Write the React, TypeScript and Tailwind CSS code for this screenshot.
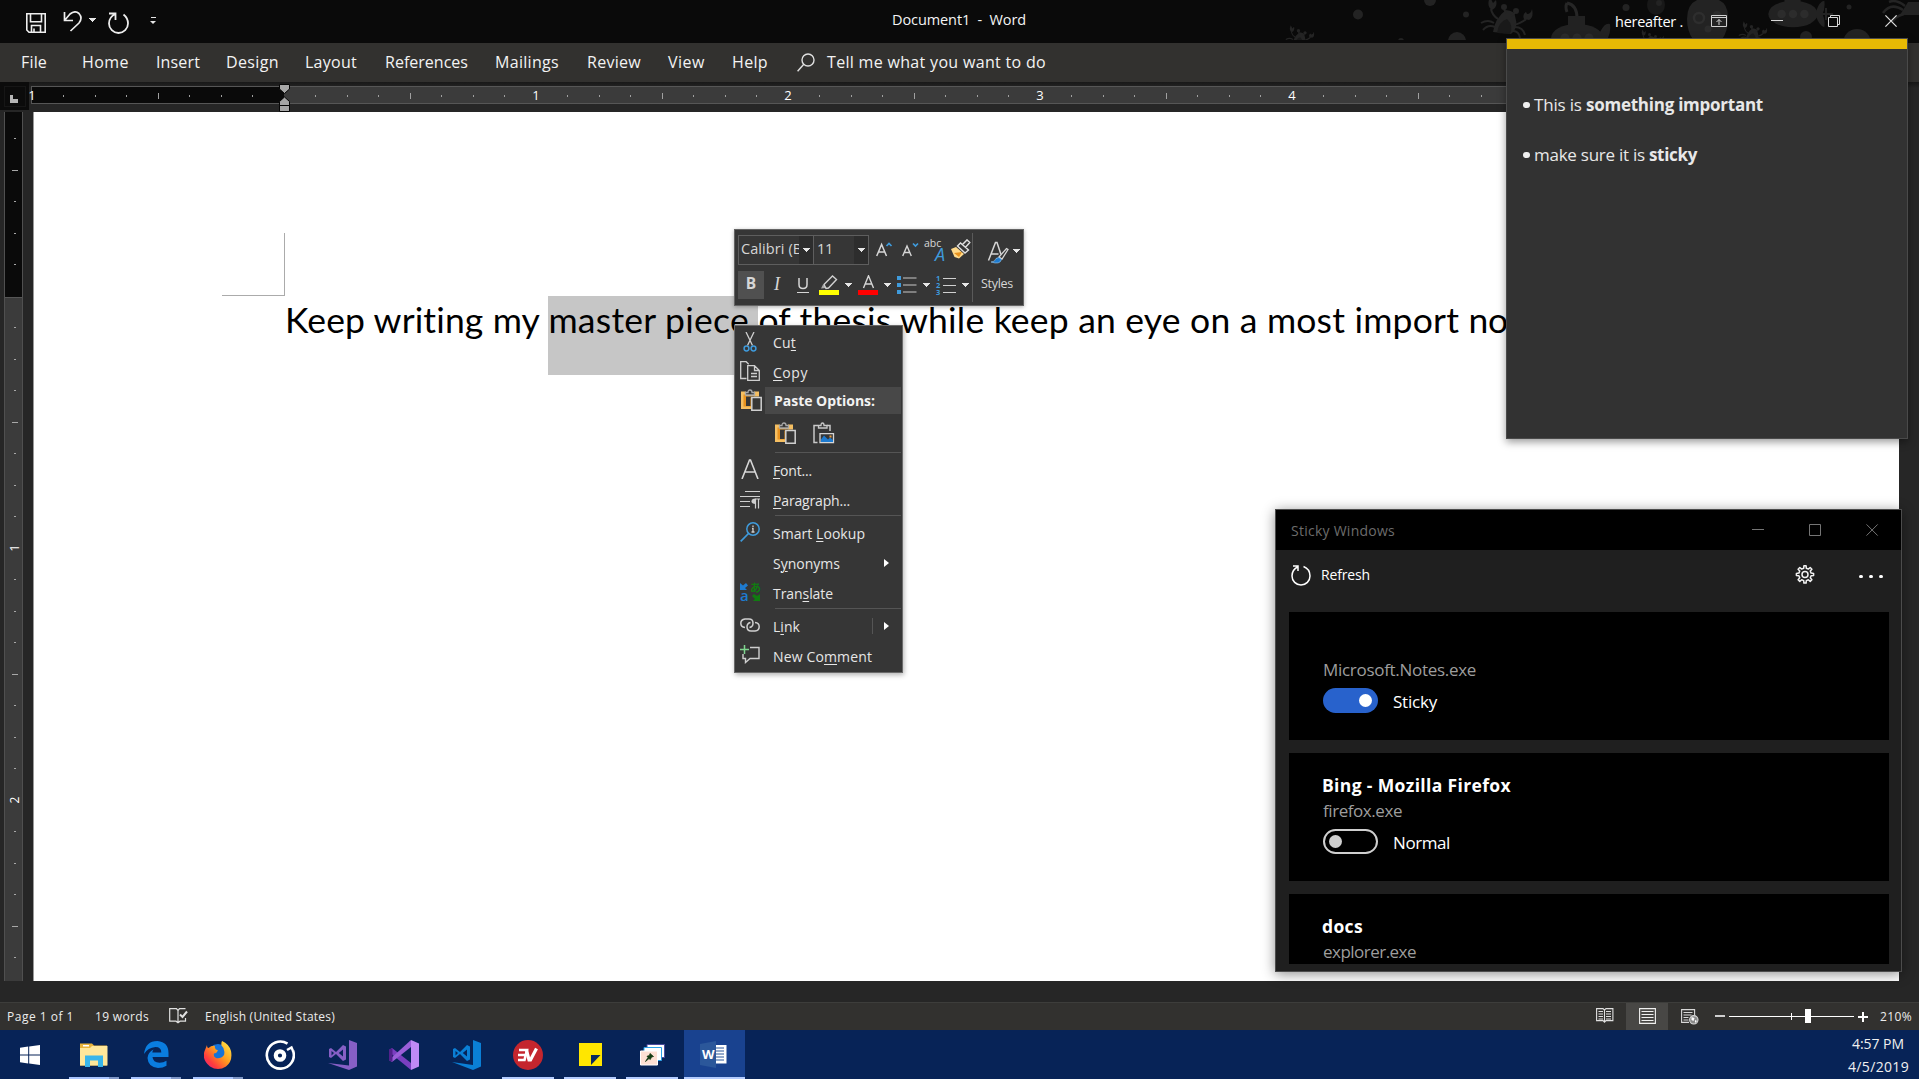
import { useLayoutEffect, useRef, useState, type ReactNode } from "react";

/* Text run tracked so that it fills exactly `w` pixels. */
function T({ w, className = "", children }: { w: number; className?: string; children: ReactNode }) {
  const ref = useRef<HTMLSpanElement>(null);
  const [spacing, setSpacing] = useState(0);
  useLayoutEffect(() => {
    const el = ref.current;
    if (!el) return;
    const n = el.textContent?.length ?? 1;
    setSpacing((w - el.getBoundingClientRect().width) / n);
  }, [w]);
  return (
    <span ref={ref} className={`inline-block shrink-0 whitespace-pre ${className}`} style={{ letterSpacing: spacing }}>
      {children}
    </span>
  );
}

function Caret({ className = "" }: { className?: string }) {
  return (
    <svg className={className} width="7" height="4" viewBox="0 0 7 4" shapeRendering="crispEdges">
      <path d="M0 0h7L3.500 4z" fill="#e6e6e6" />
    </svg>
  );
}

/* ---------- Title bar ---------- */

function Crab({ t }: { t: string }) {
  return (
    <g transform={t}>
      <path d="M-12 8Q-10-6 1-14Q10-13 10-8Q14 4 6 10Q-4 9-12 8z" fill="#242424" />
      <path d="M-8 9Q-6-3 2-5Q9 2 5 10z" fill="#191919" />
      <circle cx="-1" cy="-17" r="3" fill="#242424" />
      <circle cx="11" cy="-13" r="3" fill="#242424" />
      <path d="M-1-15l2 4M10-11l-4 3M-7-5q-6-4-7-10M9 1q8-2 12-6" stroke="#242424" strokeWidth="2" fill="none" />
      <path d="M-13-14q-6-4-2-13l3 6 3-3q2 7-4 10zM19-5q-2-5 2-7l1 2q4 0 5-5q2 9-3 11z" fill="#242424" />
      <path d="M-11-1q-6-4-13 0M-10 3q-7-3-12 3M10 3q8 0 10 8M8 7q6 0 7 7" stroke="#242424" strokeWidth="2" fill="none" />
    </g>
  );
}

function Submarine({ t }: { t: string }) {
  return (
    <g transform={t}>
      <ellipse cx="0" cy="0" rx="26" ry="14" fill="#222" />
      <path d="M-9-22h17v10h-17zM24-2q4-12 9-12q1 8-2 14q3 6 2 14q-6-2-9-13z" fill="#222" />
      <circle cx="-12" cy="0" r="4.5" fill="#2c2c2c" />
      <circle cx="0" cy="0" r="4.5" fill="#2c2c2c" />
      <circle cx="12" cy="0" r="4.5" fill="#2c2c2c" />
    </g>
  );
}

function SeaPattern() {
  return (
    <svg className="absolute left-[1270px] top-0" width="649" height="40" viewBox="1270 0 649 40">
      <g fill="#232323">
        <circle cx="1358" cy="14.500" r="5" />
        <circle cx="1430" cy="0" r="6" />
        <circle cx="1466" cy="14.500" r="3" />
        <circle cx="1457" cy="41" r="9" />
        <circle cx="1401" cy="41" r="3" />
        <circle cx="1626" cy="7.500" r="3.500" />
        <ellipse cx="1656" cy="5" rx="9" ry="10" fill="#181818" />
        <circle cx="1659" cy="3" r="3" />
        <path d="M1687 19q0-21 21-21t20 21q0 13-7 22h-27q-7-9-7-22z" />
        <circle cx="1806" cy="37" r="6" />
        <circle cx="1849" cy="7" r="2.500" />
        <circle cx="1857" cy="43" r="14" />
        <path d="M1590 26q9 4 10 6q5-10 10-8l-8 16h-12zM1900 15l8-13h11v13h-18z" />
        <path d="M1903 10q-12-8-20 3M1905 6q-9-7-16-4M1904 14q-8 2-12 8" fill="none" stroke="#242424" strokeWidth="2.500" />
        <path d="M1567 3q10 2 10 15M1567 3q-2 4 0 9" fill="none" stroke="#262626" strokeWidth="3" />
        <path d="M1820 14h13M1826 8v12" fill="none" stroke="#242424" strokeWidth="2" />
      </g>
      <circle cx="1699" cy="18" r="5" fill="none" stroke="#2e2e2e" strokeWidth="2.500" />
      <circle cx="1717" cy="15" r="4" fill="#2c2c2c" />
      <circle cx="1708" cy="29" r="3.500" fill="#2c2c2c" />
      <Crab t="translate(1505 24)" />
      <Crab t="translate(1299 40) scale(.55)" />
      <Crab t="translate(1752 36) scale(.55)" />
      <Crab t="translate(1650 43) scale(.5)" />
      <Submarine t="translate(1577 38)" />
      <Submarine t="translate(1793 14) scale(.95)" />
    </svg>
  );
}

function TitleBar() {
  return (
    <header className="relative flex h-[43px] shrink-0 items-center bg-[#0a0a0a]">
      <SeaPattern />
      <div className="relative flex w-[892px] items-center pl-[26px]">
        <svg width="20" height="20" viewBox="0 0 20 20" fill="none" stroke="#eee" strokeWidth="1.600" className="mt-[3px]">
          <path d="M.8.8h18.400v18.400H3L.8 17zM4.500.8v8h11v-8M5.500 19v-6.500h9V19M8 19v-3.500" />
        </svg>
        <svg width="20" height="21" viewBox="0 0 20 21" fill="none" stroke="#eee" strokeWidth="1.700" className="ml-[17px]">
          <path d="M1.500 1v8.500H10M1.500 9.500L7 3Q12-1 16 2.500Q20 7 16 12L7.500 20" />
        </svg>
        <Caret className="ml-[6px] mt-[-4px]" />
        <svg width="21" height="22" viewBox="0 0 21 22" fill="none" stroke="#eee" strokeWidth="1.800" className="ml-[12px] mt-[2px]">
          <path d="M1 1.500h6.500V8M7.500 2Q1 5 1 11.500a9.500 9.500 0 0 0 19 0Q20 6 15.500 2.500" />
        </svg>
        <div className="ml-[21px] mt-[-2px] flex flex-col items-center gap-[3px]">
          <div className="h-px w-[5px] bg-[#e6e6e6]" />
          <svg width="6" height="3" viewBox="0 0 6 3">
            <path d="M0 0h6L3 3z" fill="#e6e6e6" />
          </svg>
        </div>
      </div>
      <T w={134} className="relative -top-[2px] text-[14.500px] text-[#f4f4f4]">
        {"Document1  -  Word"}
      </T>
      <div className="relative ml-auto flex items-center pr-[21px]">
        <T w={68} className="text-[14.500px] text-white">hereafter .</T>
        <svg width="16" height="12" viewBox="0 0 16 12" fill="none" stroke="#d0d0d0" className="ml-[28px] -mt-px">
          <path d="M.5.500h15v11H.5zM.5 2.500h15M8 10V4.500M5.500 7L8 4.500 10.500 7" />
        </svg>
        <div className="ml-[44px] mt-[-2px] h-px w-[12px] bg-[#d8d8d8]" />
        <svg width="12" height="12" viewBox="0 0 12 12" fill="none" stroke="#d8d8d8" className="ml-[45px] -mt-px">
          <path d="M.5 2.500h9v9h-9zM2.500 2V.5h9v9H10" />
        </svg>
        <svg width="12" height="12" viewBox="0 0 12 12" fill="none" stroke="#e0e0e0" strokeWidth="1.200" className="ml-[45px] mr-px -mt-px">
          <path d="M.4.400l11.200 11.200M11.600.400L.4 11.600" />
        </svg>
      </div>
    </header>
  );
}

/* ---------- Ribbon ---------- */

const TABS: [string, number, string][] = [
  ["File", 26, "ml-[21px]"],
  ["Home", 47, "ml-[35px]"],
  ["Insert", 44, "ml-[27px]"],
  ["Design", 53, "ml-[26px]"],
  ["Layout", 52, "ml-[26px]"],
  ["References", 83, "ml-[28px]"],
  ["Mailings", 64, "ml-[27px]"],
  ["Review", 54, "ml-[28px]"],
  ["View", 37, "ml-[27px]"],
  ["Help", 36, "ml-[27px]"],
];

function Ribbon() {
  return (
    <nav className="flex h-[39px] shrink-0 items-center bg-[#32312f] pb-[2px] text-[16px] text-[#f3f3f3]">
      {TABS.map(([label, w, gap]) => (
        <T key={label} w={w} className={gap}>{label}</T>
      ))}
      <svg width="18" height="19" viewBox="0 0 18 19" fill="none" stroke="#e0e0e0" strokeWidth="1.400" className="ml-[29px] mt-px">
        <circle cx="11" cy="7" r="6" />
        <path d="M6.800 11.300L.6 18.200" />
      </svg>
      <T w={219} className="ml-[12px]">Tell me what you want to do</T>
    </nav>
  );
}

/* ---------- Rulers ---------- */

function HRuler() {
  const cells = Array.from({ length: 58 }, (_, k) => k - 8);
  return (
    <div className="flex h-[30px] shrink-0 bg-[#262626] bg-linear-to-b from-[#181818] from-0% to-[#262626] to-20%">
      <div className="flex h-[28px] w-[29px] items-center justify-center bg-[#0b0b0b]">
        <div className="flex h-[21px] w-[22px] items-end justify-center border border-[#161616] pb-[3px] pr-[2px]">
          <div className="h-[8px] w-[8px] border-b-[4px] border-l-[3px] border-[#b5b5b5]" />
        </div>
      </div>
      <div className="relative ml-[2px] mt-[4px] flex h-[18px] w-[1868px]">
        <div className="w-[253px] border-y border-l border-[#565656] bg-[#0a0a0a]" />
        <div className="flex-1 border-y border-[#565656] bg-[#3b3b3b]" />
        <div className="absolute left-[-14.750px] top-0 flex h-[18px] items-center">
          {cells.map((i) => (
            <div key={i} className="flex w-[31.500px] shrink-0 justify-center text-[13px] leading-none text-white">
              {i === 0 ? null : i % 8 === 0 ? (
                <span className="mt-px">{Math.abs(i / 8)}</span>
              ) : i % 4 === 0 ? (
                <div className="mt-[2px] h-[6px] w-px bg-[#a0a0a0]" />
              ) : (
                <div className="mt-[2px] h-[2px] w-px bg-[#a0a0a0]" />
              )}
            </div>
          ))}
        </div>
        <svg className="absolute left-[248px] top-[-2px]" width="11" height="28" viewBox="0 0 11 28" fill="#a6a6a6" stroke="#050505">
          <path d="M.5.500h10v4.500l-5 4.500-5-4.500zM.5 27.500v-6h10v6zM.5 21.500v-4l5-4.500 5 4.500v4z" />
        </svg>
      </div>
    </div>
  );
}

function VRuler() {
  const cells = Array.from({ length: 27 }, (_, k) => k - 5);
  return (
    <div className="relative ml-[4px] flex h-[869px] w-[19px] shrink-0 flex-col overflow-hidden border-x border-[#505050]">
      <div className="h-[185px] bg-[#0a0a0a]" />
      <div className="flex-1 border-t border-[#565656] bg-[#3b3b3b]" />
      <div className="absolute inset-x-0 top-[11px] flex flex-col">
        {cells.map((i) => (
          <div key={i} className="flex h-[31.500px] items-center justify-center pl-[3px] text-[12px] leading-none text-white">
            {i === 0 ? null : i % 8 === 0 ? (
              <span className="-rotate-90">{i / 8}</span>
            ) : i % 4 === 0 ? (
              <div className="h-px w-[6px] bg-[#a8a8a8]" />
            ) : (
              <div className="h-px w-[2px] bg-[#a8a8a8]" />
            )}
          </div>
        ))}
      </div>
    </div>
  );
}

/* ---------- Document ---------- */

function Page() {
  return (
    <main className="ml-[10px] h-[869px] w-[1866px] overflow-hidden border-l border-[#999] bg-white">
      <div className="ml-[188px] mt-[121px] h-[63px] w-[63px] border-b border-r border-[#ababab]" />
      <div className="ml-[251px] flex h-[79px] items-start whitespace-pre font-[Lato,sans-serif] text-[35.500px] leading-[48px] text-black">
        <T w={264}>{"Keep writing my "}</T>
        <div className="h-[79px] w-[210px] bg-[#c6c6c6]">
          <T w={210}>{"master piece "}</T>
        </div>
        <T w={710}>{"of thesis while keep an eye on a most import "}</T>
        <span className="tracking-[-0.3px]">no</span>
      </div>
    </main>
  );
}

/* ---------- Mini toolbar ---------- */

function MiniToolbar() {
  return (
    <div className="absolute left-[734px] top-[229px] flex h-[77px] w-[290px] border border-[#646464] bg-[#363636] pl-[3px] text-[#d6d6d6] shadow-[0_1px_4px_rgba(0,0,0,0.3)]">
      <div className="flex w-[234px] flex-col pt-[5px]">
        <div className="flex h-[30px] items-center">
          <div className="flex h-[30px] w-[76px] border border-[#5e5e5e]">
            <div className="flex w-[60px] items-center overflow-hidden pb-[3px] pl-[2px] text-[14.500px]">
              <T w={70}>Calibri (Bo</T>
            </div>
            <div className="flex flex-1 items-center justify-center bg-[#2d2d2d]"><Caret /></div>
          </div>
          <div className="flex h-[30px] w-[55px] border border-l-0 border-[#5e5e5e]">
            <div className="flex w-[40px] items-center pb-[3px] pl-[3px] text-[14.500px]"><T w={16}>11</T></div>
            <div className="flex flex-1 items-center justify-center bg-[#2d2d2d]"><Caret /></div>
          </div>
          <svg className="mb-[2px] ml-[7px]" width="17" height="15" viewBox="0 0 17 15" fill="none">
            <path d="M.7 14L5.600 2.500 10.500 14M2.500 10h6.200" stroke="#d6d6d6" strokeWidth="1.500" />
            <path d="M10.500 4L13 1.500 15.500 4" stroke="#3f9bdc" strokeWidth="1.700" />
          </svg>
          <svg className="mb-[2px] ml-[9px]" width="17" height="15" viewBox="0 0 17 15" fill="none">
            <path d="M.7 14L5 4 9.300 14M2.200 10.500h5.500" stroke="#d6d6d6" strokeWidth="1.400" />
            <path d="M11 1.500L13.500 4 16 1.500" stroke="#3f9bdc" strokeWidth="1.700" />
          </svg>
          <div className="relative ml-[5px] h-[24px] w-[24px]">
            <span className="absolute left-0 top-0 text-[10.500px] leading-none">abc</span>
            <span className="absolute left-[11px] top-[7px] text-[18px] italic leading-none text-[#3f9bdc]">A</span>
          </div>
          <svg className="mb-[2px] ml-[2px]" width="21" height="21" viewBox="0 0 21 21">
            <path d="M1 10l5-2 8 7-5 4.500L4.500 18z" fill="#ffd98a" />
            <path d="M4 14l8-1-3 5z" fill="#e8921e" />
            <path d="M7.500 7l3-3 8 7-3.500 3zM12.500 5.500L17 .9l2.800 2.700-4.300 4.600" fill="#363636" stroke="#e0e0e0" strokeWidth="1.400" />
          </svg>
        </div>
        <div className="mt-[6px] flex h-[28px] items-center">
          <div className="flex h-[28px] w-[26px] items-center justify-center bg-[#505050] pb-[2px] text-[15.500px] font-bold">B</div>
          <div className="flex w-[26px] justify-center pb-[2px] font-['Liberation_Serif',serif] text-[18px] italic">I</div>
          <div className="flex w-[25px] flex-col items-center">
            <svg width="12" height="17" viewBox="0 0 12 17" fill="none" stroke="#d6d6d6">
              <path d="M2 1v6.500q0 4 4 4t4-4V1" strokeWidth="1.500" />
              <path d="M0 15.500h12" />
            </svg>
          </div>
          <svg className="ml-[4px]" width="21" height="20" viewBox="0 0 21 20">
            <path d="M2 13.500l2-4 3.500 3.500z" fill="#aaa" />
            <path d="M5 9.500L13.500 1l4 3.500-8 8.500-2.500.5z" fill="none" stroke="#d0d0d0" strokeWidth="1.400" />
            <path d="M0 15h20v5H0z" fill="#ff0" />
          </svg>
          <Caret className="ml-[5px]" />
          <svg className="ml-[6px]" width="21" height="20" viewBox="0 0 21 20">
            <path d="M5.500 13L10.500.8 15.500 13M7.200 9h6.600" fill="none" stroke="#d6d6d6" strokeWidth="1.400" />
            <path d="M0 15h20v5H0z" fill="#f00" />
          </svg>
          <Caret className="ml-[5px]" />
          <svg className="ml-[6px]" width="20" height="20" viewBox="0 0 20 20">
            <path d="M0 1h4v4H0zM0 8h4v4H0zM0 15h4v4H0z" fill="#3f9bdc" />
            <path d="M6 3h13.500M6 10h13.500M6 17h13.500" stroke="#c8c8c8" strokeWidth="1.200" />
          </svg>
          <Caret className="ml-[6px]" />
          <div className="ml-[6px] flex items-center gap-[3px]">
            <div className="flex w-[4px] flex-col text-[7.500px] font-bold leading-[7px] text-[#3f9bdc]">
              <span>1</span><span>2</span><span>3</span>
            </div>
            <div className="flex w-[13px] flex-col gap-[6px]">
              <div className="h-px bg-[#d0d0d0]" /><div className="h-px bg-[#d0d0d0]" /><div className="h-px bg-[#d0d0d0]" />
            </div>
          </div>
          <Caret className="ml-[6px]" />
        </div>
      </div>
      <div className="mt-[3px] h-[69px] w-px bg-[#5a5a5a]" />
      <div className="flex w-[49px] flex-col items-center pt-[11px]">
        <div className="flex items-center gap-[4px] pl-[11px]">
          <svg width="22" height="24" viewBox="0 0 22 24" fill="none">
            <path d="M1.500 19.500L8.500 1.500h1.500l4 12M4 13h7.500" stroke="#d6d6d6" strokeWidth="1.500" />
            <path d="M12 16l7.500-8.500 1.500 1L15 18z" stroke="#d6d6d6" strokeWidth="1.300" fill="#363636" />
            <path d="M4 21q4 0 5-3.500 3-2.500 5.500 1Q13 24 4 21z" fill="#1e7bd0" stroke="#9ed0f5" strokeWidth=".6" />
          </svg>
          <Caret className="-mt-[4px]" />
        </div>
        <T w={33} className="mt-[10px] pr-px text-[12.500px] leading-[18px]">Styles</T>
      </div>
    </div>
  );
}

/* ---------- Context menu ---------- */

function PasteIcon() {
  return (
    <svg width="21" height="22" viewBox="0 0 21 22" fill="none">
      <path d="M0 2.500h5v3h8v-3h5v5h-7.500V20H0z" fill="#f5bf62" />
      <path d="M2.500 5.500h2.500v2h8v2h-2.500v8h-8z" fill="#e8921e" />
      <path d="M5 7.500h8v1H9.500V17H5z" fill="#363636" />
      <path d="M4.500 6V3.500H7Q7 1 9 1t2 2.500h2.500V6z" stroke="#a8a8a8" strokeWidth="1.300" fill="#363636" />
      <path d="M10.800 8.500h9.400v12.700h-9.400z" stroke="#d0d0d0" strokeWidth="1.500" fill="#363636" />
    </svg>
  );
}

function PastePictureIcon() {
  return (
    <svg width="22" height="22" viewBox="0 0 22 22" fill="none">
      <path d="M4.500 20.500H1V3.500h4M14 3.500h3V9" stroke="#c8c8c8" strokeWidth="1.500" />
      <path d="M5.500 6V3.500H8Q8 1 9.500 1T11 3.500h3V6z" stroke="#c8c8c8" strokeWidth="1.300" />
      <path d="M7 11.700h13.500v9H7z" stroke="#d6d6d6" strokeWidth="1.300" fill="#363636" />
      <path d="M8 20v-2.500l3-4 4 4 2-2 3 2.500v2z" fill="#1e7bd0" />
      <path d="M16.500 13.500h2v2h-2z" fill="#f0a040" />
    </svg>
  );
}

const CutIcon = (
  <svg width="14" height="20" viewBox="0 0 14 20" fill="none" className="-mt-[3px]">
    <path d="M3 0l6.500 13.500M11 0L4.500 13.500" stroke="#cfcfcf" strokeWidth="1.300" />
    <circle cx="3.500" cy="16.500" r="2.400" stroke="#3f9bdc" strokeWidth="1.500" />
    <circle cx="10.500" cy="16.500" r="2.400" stroke="#3f9bdc" strokeWidth="1.500" />
  </svg>
);
const CopyIcon = (
  <svg width="20" height="20" viewBox="0 0 20 20" fill="none" stroke="#cfcfcf" strokeWidth="1.300" className="-mt-[5px]">
    <path d="M6.500 17.500H.7V.7h5.500l2.500 2.500" />
    <path d="M7.700 4.700h6.800l4.800 4.800v9.800H7.700zM14.500 5v4.500h4.500M11 12.500h6M11 15.500h6" />
  </svg>
);
const FontIcon = (
  <svg width="18" height="20" viewBox="0 0 18 20" fill="none" stroke="#d6d6d6" strokeWidth="1.600" className="-mt-[5px]">
    <path d="M1 20L8.500 1h1L17 20M4 13h10" />
  </svg>
);
const ParagraphIcon = (
  <svg width="20" height="19" viewBox="0 0 20 19" fill="none" stroke="#cfcfcf" strokeWidth="1.200" className="-mt-[3px]">
    <path d="M5 1.500h15M0 6.500h20M0 11.500h10M0 16.500h10" />
    <path d="M15.500 18.500V9M18.500 18.500V9M20 9h-5" />
    <path d="M15.500 8.500v5.500q-4 0-4-2.700t4-2.800z" fill="#cfcfcf" stroke="none" />
  </svg>
);
const LookupIcon = (
  <svg width="20" height="20" viewBox="0 0 20 20" fill="none" className="-mt-[5px]">
    <circle cx="13" cy="7" r="6.200" stroke="#3f9bdc" strokeWidth="1.500" />
    <path d="M8.500 11.500L.7 19.300" stroke="#3f9bdc" strokeWidth="1.700" />
    <path d="M13 3.500v1.500M12 6.500h1v3.500M11.500 10h3" stroke="#d0d0d0" strokeWidth="1.300" />
  </svg>
);
const TranslateIcon = (
  <div className="relative -mt-[4px] h-[20px] w-[20px] leading-none">
    <svg width="20" height="20" viewBox="0 0 20 20">
      <path d="M0 1v7h7L5 6l3-2.500L6 1 3 3.500z" fill="#1e7bd0" />
      <path d="M20 12v7h-7l2-2-3-3 2-2 3 2z" fill="#107c10" />
    </svg>
    <span className="absolute left-0 top-[6px] text-[15px] font-semibold leading-[15px] text-[#1e7bd0]">a</span>
    <span className="absolute left-[10px] top-0 font-['Noto_Sans_CJK_JP',sans-serif] text-[11px] font-bold leading-[11px] text-[#107c10]">あ</span>
  </div>
);
const LinkIcon = (
  <svg width="20" height="14" viewBox="0 0 20 14" fill="none" stroke="#cfcfcf" strokeWidth="1.500" className="-mt-[5px]">
    <path d="M5 9.500Q.8 9 .8 5.300T5 1h4q4 0 4 4.200 0 3.600-3.500 4.300" />
    <path d="M15 4.500q4.200.5 4.200 4.200T15 13h-4q-4 0-4-4.200 0-3.600 3.500-4.300" />
  </svg>
);
const CommentIcon = (
  <svg width="20" height="19" viewBox="0 0 20 19" fill="none" className="-mt-[6px]">
    <path d="M10 2.500h9v11h-9l-4.500 4v-4H3V9" stroke="#cfcfcf" strokeWidth="1.400" />
    <path d="M4.500 0v9M0 4.500h9" stroke="#7fd68f" strokeWidth="1.500" />
  </svg>
);

function Item({ icon, w, arrow, split, children }: { icon?: ReactNode; w: number; arrow?: boolean; split?: boolean; children: ReactNode }) {
  return (
    <div className="flex h-[30px] items-center">
      <div className="flex w-[30px] justify-center">{icon}</div>
      <T w={w} className="ml-[8px] pb-px leading-[18px]">{children}</T>
      {arrow && (
        <div className="-mt-[2px] ml-auto flex items-center">
          {split && <div className="mr-[11px] h-[16px] w-px bg-[#555]" />}
          <svg width="5" height="8" viewBox="0 0 5 8" className="mr-[13px]">
            <path d="M0 0l5 4-5 4z" fill="#fff" />
          </svg>
        </div>
      )}
    </div>
  );
}

function Sep() {
  return <div className="ml-[40px] mr-px h-px bg-[#555]" />;
}

function U({ children }: { children: string }) {
  return <span className="underline decoration-1 underline-offset-[2px]">{children}</span>;
}

function ContextMenu() {
  return (
    <div className="absolute left-[734px] top-[325px] h-[348px] w-[169px] border border-[#6a6a6a] bg-[#363636] pt-[2px] text-[14px] text-[#e6e6e6] shadow-[1px_2px_5px_rgba(0,0,0,0.3)]">
      <Item icon={CutIcon} w={23}>Cu<U>t</U></Item>
      <Item icon={CopyIcon} w={35}><U>C</U>opy</Item>
      <div className="-mt-px flex h-[27px] items-center">
        <div className="flex w-[30px] justify-center pb-px pl-[2px]"><PasteIcon /></div>
        <div className="mr-px flex h-[27px] flex-1 items-center bg-[#484848] pl-[9px]">
          <T w={101} className="font-bold leading-[18px] text-[#f2f2f2]">Paste Options:</T>
        </div>
      </div>
      <div className="flex h-[38px] items-center gap-[17px] pl-[40px]">
        <PasteIcon />
        <PastePictureIcon />
      </div>
      <Sep />
      <div className="mt-[3px]">
        <Item icon={FontIcon} w={39}><U>F</U>ont...</Item>
        <div className="-mb-px"><Item icon={ParagraphIcon} w={77}><U>P</U>aragraph...</Item></div>
      </div>
      <Sep />
      <div className="mt-[3px]">
        <Item icon={LookupIcon} w={92}>Smart <U>L</U>ookup</Item>
        <Item w={67} arrow>S<U>y</U>nonyms</Item>
        <div className="-mb-px"><Item icon={TranslateIcon} w={60}>Tran<U>s</U>late</Item></div>
      </div>
      <Sep />
      <div className="mt-[3px]">
        <Item icon={LinkIcon} w={27} arrow split>L<U>i</U>nk</Item>
        <Item icon={CommentIcon} w={99}>New Co<U>m</U>ment</Item>
      </div>
    </div>
  );
}

/* ---------- Sticky note ---------- */

function Note() {
  return (
    <div className="absolute left-[1506px] top-[38px] h-[401px] w-[402px] border border-[#4a4a4a] bg-[#323232] text-[17px] leading-[24px] text-[#e8e8e8] shadow-[0_3px_8px_rgba(0,0,0,0.4)]">
      <div className="h-[10px] bg-[#e7b904]" />
      <div className="mt-[44px] flex items-center pl-[16px]">
        <div className="h-[6px] w-[7px] rounded-full bg-[#f0f0f0]" />
        <T w={52} className="ml-[4px]">{"This is "}</T>
        <T w={177} className="font-bold">something important</T>
      </div>
      <div className="mt-[26px] flex items-center pl-[16px]">
        <div className="h-[6px] w-[7px] rounded-full bg-[#f0f0f0]" />
        <T w={115} className="ml-[4px]">{"make sure it is "}</T>
        <T w={48} className="font-bold">sticky</T>
      </div>
    </div>
  );
}

/* ---------- Sticky Windows app ---------- */

function Toggle({ on }: { on?: boolean }) {
  return on ? (
    <div className="flex h-[25px] w-[55px] items-center justify-end rounded-full bg-[#2862cc] pr-[6px]">
      <div className="h-[13px] w-[13px] rounded-full bg-white" />
    </div>
  ) : (
    <div className="flex h-[25px] w-[55px] items-center rounded-full border-[2.500px] border-[#cfcfcf] pl-[4px]">
      <div className="h-[13px] w-[13px] rounded-full bg-[#cfcfcf]" />
    </div>
  );
}

function Card({ title, titleW = 0, exe, exeW, on, state, stateW = 0 }: { title?: string; titleW?: number; exe: string; exeW: number; on?: boolean; state?: string; stateW?: number }) {
  return (
    <div className="mb-[13px] h-[128px] shrink-0 bg-black pl-[34px] pt-[20px] text-[17px] leading-[25px]">
      <div className="-ml-px h-[25px] text-[17.500px] font-bold text-white">{title && <T w={titleW}>{title}</T>}</div>
      <div className="h-[25px] text-[#9d9d9d]"><T w={exeW}>{exe}</T></div>
      {state && (
        <div className="mt-[6px] flex items-center text-white">
          <Toggle on={on} />
          <T w={stateW} className="relative top-px ml-[15px]">{state}</T>
        </div>
      )}
    </div>
  );
}

function StickyWindows() {
  return (
    <div className="absolute left-[1275px] top-[509px] flex h-[463px] w-[627px] flex-col border border-[#4c4c4c] bg-[#1f1f1f] shadow-[0_2px_12px_rgba(0,0,0,0.45)]">
      <div className="flex h-[40px] shrink-0 items-center bg-black pl-[15px] pr-[22px]">
        <T w={104} className="text-[14px] text-[#6c6c6c]">Sticky Windows</T>
        <svg width="127" height="12" viewBox="0 0 127 12" fill="none" stroke="#757575" className="ml-auto">
          <path d="M0 5.500h12M57.500.500h11v11h-11zM114.500.400l11.200 11.200M125.700.400l-11.200 11.200" />
        </svg>
      </div>
      <div className="flex h-[49px] shrink-0 items-center pl-[15px] pr-[18px]">
        <svg width="20" height="21" viewBox="0 0 20 21" fill="none" stroke="#fff" strokeWidth="1.500" className="mt-px">
          <path d="M2 1h5v5M7 1.700Q1 4.500 1 11a9 9 0 0 0 18 0Q19 4 12.500 1.500" />
        </svg>
        <T w={49} className="ml-[10px] text-[14px] text-white">Refresh</T>
        <svg width="20" height="20" viewBox="0 0 20 20" fill="none" stroke="#f2f2f2" strokeWidth="1.500" strokeLinejoin="round" className="ml-auto mt-px">
          <path d="M8.700 3.300L8.900.8h2.200l.2 2.500 2 .8 1.900-1.600 1.700 1.700-1.600 1.900.8 2 2.500.3v2.200l-2.500.2-.8 2 1.600 1.900-1.700 1.700-1.900-1.600-2 .8-.2 2.500H8.900l-.2-2.500-2-.8-1.900 1.600-1.700-1.700 1.600-1.900-.8-2-2.500-.2V8.400l2.500-.3.8-2-1.600-1.900 1.700-1.700 1.900 1.600z" />
          <circle cx="10" cy="9.500" r="3" />
        </svg>
        <div className="ml-[44px] mt-[4px] flex gap-[6px]">
          <div className="h-[3px] w-[4px] rounded-full bg-white" />
          <div className="h-[3px] w-[4px] rounded-full bg-white" />
          <div className="h-[3px] w-[4px] rounded-full bg-white" />
        </div>
      </div>
      <div className="mx-[12px] mt-[13px] flex h-[352px] flex-col overflow-hidden pl-px">
        <Card exe="Microsoft.Notes.exe" exeW={153} on state="Sticky" stateW={44} />
        <Card title="Bing - Mozilla Firefox" titleW={189} exe="firefox.exe" exeW={79} state="Normal" stateW={57} />
        <Card title="docs" titleW={41} exe="explorer.exe" exeW={93} />
      </div>
    </div>
  );
}

/* ---------- Status bar ---------- */

function StatusBar() {
  return (
    <div className="flex h-[28px] shrink-0 items-center border-t border-[#3d3d3b] bg-[#32312f] text-[12px] text-[#ececec]">
      <T w={67} className="ml-[7px]">Page 1 of 1</T>
      <T w={54} className="ml-[21px]">19 words</T>
      <svg width="19" height="16" viewBox="0 0 19 16" fill="none" stroke="#e0e0e0" strokeWidth="1.200" className="-mt-px ml-[20px]">
        <path d="M9 2.500L7.500.7H.7v12.500H7l2 1.500 2-1.500h5.500V10M9 2.500V14M9 2.500L10.500.7h6" />
        <path d="M11 6.500l2.500 2.500L18 3.500" strokeWidth="2" />
      </svg>
      <T w={130} className="ml-[17px]">English (United States)</T>
      <svg width="18" height="15" viewBox="0 0 18 15" fill="none" stroke="#e0e0e0" strokeWidth="1.100" className="-mt-[3px] ml-auto">
        <path d="M8.500 2L7 .6H.6v12H7l1.500 1.500 1.500-1.500h6.900V.6H10zM8.500 2v12M2.500 3.500H7M2.500 6H7M2.500 8.500H7M2.500 11H7M10 3.500h5M10 6h5M10 8.500h5M10 11h5" />
      </svg>
      <div className="ml-[12px] flex h-[28px] w-[42px] items-center justify-center bg-[#484745]">
        <svg width="17" height="16" viewBox="0 0 17 16" fill="none" stroke="#f0f0f0" strokeWidth="1.100" className="-mt-px">
          <path d="M.6.600h15.800v14.800H.6zM2.500 3.500h12M2.500 6.500h12M2.500 9.500h12M2.500 12.500h12" />
        </svg>
      </div>
      <svg width="18" height="16" viewBox="0 0 18 16" fill="none" stroke="#d8d8d8" strokeWidth="1.100" className="ml-[13px]">
        <path d="M8 13.400H.6V.6h13V6M2.500 3.500h9M2.500 6h8M2.500 8.500h5M2.500 11h5" />
        <circle cx="12.800" cy="10.800" r="4.200" fill="#8a8a8a" />
        <path d="M10.500 8l3 1-1 3-2-1zM14 11l2 1-2 2z" fill="#fff" stroke="none" />
      </svg>
      <div className="-mt-px ml-[16px] h-[2px] w-[10px] bg-[#cfcfcf]" />
      <svg width="125" height="16" viewBox="0 0 125 16" shapeRendering="crispEdges" className="-mt-px ml-[4px]">
        <path d="M0 8h125v1H0zM62 5h1v7h-1zM76 1h6v14h-6z" fill="#fff" />
      </svg>
      <svg width="10" height="10" viewBox="0 0 10 10" className="ml-[4px]">
        <path d="M4 0h2v4h4v2H6v4H4V6H0V4h4z" fill="#fff" />
      </svg>
      <T w={32} className="ml-[12px] mr-[7px]">210%</T>
    </div>
  );
}

/* ---------- Taskbar ---------- */

const APP_ICONS: { mark: "none" | "one" | "many" | "active"; icon: ReactNode }[] = [
  {
    mark: "many",
    icon: (
      <svg width="28" height="24" viewBox="0 0 28 24">
        <path d="M0 .5h12l2 2h13v20H0z" fill="#e9b43c" />
        <path d="M0 5h10l2-2h15.500v19.500H0z" fill="#ffe79a" />
        <path d="M3 2h6v1.500H3z" fill="#fff" />
        <path d="M5 24V12.500h18V24h-5v-6.500h-8V24z" fill="#39b5ea" />
      </svg>
    ),
  },
  {
    mark: "many",
    icon: (
      <svg width="25" height="27" viewBox="0 0 25 27">
        <path d="M0 13Q1.500 0 13.500 0 24.500 1 24.500 12v4H8.500q.5 5.500 7 5.700 4 0 7-1.900v5Q19 27 14 27 4 26 3.500 17q.5-6 6-8.500Q8.500 10 8.300 11.500h9q0-5.500-5.800-5.500Q4 6.500 0 13z" fill="#0a7de0" />
      </svg>
    ),
  },
  {
    mark: "many",
    icon: (
      <svg width="28" height="28" viewBox="0 0 28 28">
        <defs>
          <linearGradient id="fox" x1="1" y1="0" x2="0" y2="1">
            <stop offset="0" stopColor="#fff04a" />
            <stop offset=".45" stopColor="#ff9a1f" />
            <stop offset=".75" stopColor="#ff3a3f" />
            <stop offset="1" stopColor="#e0208c" />
          </linearGradient>
        </defs>
        <circle cx="14" cy="13" r="10" fill="#1673d8" />
        <path d="M3 4q0 3 1.500 3Q8 4 11 5q-1 3 3 4.500-1 2.500-4 3-1 3 2 4.500 5 1 8-3 1.500-6-2.500-9.500Q17 2 18 0q7 3 9 10 2 10-5 15.500-8 5-16 0Q-3 18 1 9z" fill="url(#fox)" />
      </svg>
    ),
  },
  {
    mark: "none",
    icon: (
      <svg width="30" height="30" viewBox="0 0 30 30" fill="none">
        <path d="M22.500 3.700A13.500 13.500 0 1 0 28 10.500" stroke="#fff" strokeWidth="2.600" />
        <circle cx="15" cy="15.500" r="4.200" stroke="#fff" strokeWidth="4.200" />
        <path d="M28 11L26.500 7.500 22 10" stroke="#fff" strokeWidth="2.400" />
      </svg>
    ),
  },
  {
    mark: "none",
    icon: (
      <svg width="29" height="30" viewBox="0 0 29 30">
        <path d="M21 0l8 3v23.500L21 30 0 23l21 2.500z" fill="#865fc5" />
        <path d="M1 9l2-1 5 4 7-7 3 1.500v13L15 21l-7-7-5 4-2-1zm2.500 2v4.500L6 13zm11.500-1.500L10.800 13l4.200 3.500z" fill="#865fc5" fillRule="evenodd" />
      </svg>
    ),
  },
  {
    mark: "none",
    icon: (
      <svg width="30" height="30" viewBox="0 0 30 30">
        <path d="M0 10l3-2 19 15v7L0 12z" fill="#7a3fc0" />
        <path d="M0 20l3 2L22 7V0z" fill="#9a5fd8" />
        <path d="M0 9.500L3.500 8v14L0 20.500z" fill="#52218c" />
        <path d="M22 0l8 3.500v23L22 30z" fill="#c08af5" />
      </svg>
    ),
  },
  {
    mark: "none",
    icon: (
      <svg width="29" height="30" viewBox="0 0 29 30">
        <path d="M21 0l8 3v23.500L21 30 0 22l21 3z" fill="#0a7fd6" />
        <path d="M1 9l2-1 5 4 7-7 3 1.500v13L15 21l-7-7-5 4-2-1zm2.500 2v4.500L6 13zm11.500-1.500L10.800 13l4.200 3.500z" fill="#0a7fd6" fillRule="evenodd" />
      </svg>
    ),
  },
  {
    mark: "one",
    icon: (
      <svg width="30" height="30" viewBox="0 0 30 30" fill="none">
        <circle cx="15" cy="15" r="15" fill="#c4262e" />
        <path d="M6 10h8l-2.500 10H5M5 15h7.500" stroke="#fff" strokeWidth="2.600" />
        <path d="M13.500 10l2.500 10h1.500L23.500 8.500" stroke="#fff" strokeWidth="3.200" />
      </svg>
    ),
  },
  {
    mark: "one",
    icon: (
      <svg width="23" height="23" viewBox="0 0 23 23">
        <path d="M0 0h23v23H0z" fill="#ffe600" />
        <path d="M12 12h9.500L12 22z" fill="#0a2a60" />
      </svg>
    ),
  },
  {
    mark: "one",
    icon: (
      <svg width="25" height="22" viewBox="0 0 25 22">
        <path d="M7 .5h17.500v13H7z" fill="#fff" stroke="#4a4a9c" />
        <path d="M4 3.500h17.500v13H4z" fill="#fff" stroke="#28a0e8" />
        <path d="M.5 7h17v14H.5z" fill="#fde0d4" stroke="#fff" />
        <path d="M10 9.500l3.500 3-2 .5-1.200 2.500-1.300-1-3.500 3 2.500-4-1-1.200 2.500-.8z" fill="#123a12" stroke="#123a12" strokeWidth=".8" />
      </svg>
    ),
  },
  {
    mark: "active",
    icon: (
      <div className="relative -left-px h-[27px] w-[27px]">
        <svg width="27" height="27" viewBox="0 0 27 27">
          <path d="M0 3l16-3v27L0 24z" fill="#2b579a" />
          <path d="M16 4h10.500v18.500H16z" fill="#fff" />
          <path d="M16 7h8M16 10h8M16 13h8M16 16h8M16 19h8" stroke="#2b579a" strokeWidth="1.200" />
        </svg>
        <span className="absolute left-[2px] top-[5px] text-[13px] font-bold leading-[17px] text-white">W</span>
      </div>
    ),
  },
];

function Taskbar() {
  return (
    <footer className="flex h-[49px] shrink-0 bg-[#072357] text-[14px] text-[#f0f0f0]">
      <div className="flex w-[63px] items-center pl-[20px]">
        <svg width="20" height="20" viewBox="0 0 20 20" fill="#fff">
          <path d="M0 2.800l8.200-1.200v7.900H0zM9.200 1.400L20 0v9.500H9.200zM0 10.500h8.200v7.900L0 17.200zM9.200 10.500H20V20L9.200 18.600z" />
        </svg>
      </div>
      {APP_ICONS.map(({ mark, icon }, i) => (
        <div key={i} className={mark === "active" ? "relative left-px flex w-[61px] flex-col bg-[#19428f]" : "flex w-[62px] flex-col"}>
          <div className="flex h-[47px] items-center justify-center pt-[2px]">{icon}</div>
          {mark === "active" && <div className="h-[2px] bg-[#b4ccff]" />}
          {mark === "one" && <div className="mx-[5px] h-[2px] bg-[#b4ccff]" />}
          {mark === "many" && (
            <div className="mx-[6px] flex h-[2px]">
              <div className="flex-1 bg-[#a8c4ff]" />
              <div className="w-[10px] bg-[#8098c8]" />
            </div>
          )}
        </div>
      ))}
      <div className="ml-auto flex flex-col items-end pr-[10px] pt-[2px] leading-[23px]">
        <T w={52} className="mr-[5px]">4:57 PM</T>
        <T w={61}>4/5/2019</T>
      </div>
    </footer>
  );
}

export default function App() {
  return (
    <div className="relative flex h-[1079px] w-[1919px] flex-col overflow-hidden bg-[#262626] font-['Open_Sans','Noto_Sans',sans-serif]">
      <TitleBar />
      <Ribbon />
      <HRuler />
      <div className="flex h-[890px] shrink-0">
        <VRuler />
        <Page />
      </div>
      <StatusBar />
      <Taskbar />
      <MiniToolbar />
      <ContextMenu />
      <Note />
      <StickyWindows />
    </div>
  );
}
